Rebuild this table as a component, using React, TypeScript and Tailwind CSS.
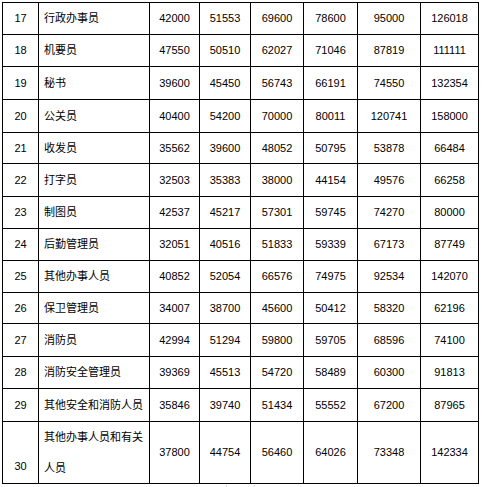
const rows: { no: string; name: string; vals: number[]; h: string }[] = [
  { no: '17', name: '行政办事员', vals: [42000, 51553, 69600, 78600, 95000, 126018], h: 'h-[32px]' },
  { no: '18', name: '机要员', vals: [47550, 50510, 62027, 71046, 87819, 111111], h: 'h-[32px]' },
  { no: '19', name: '秘书', vals: [39600, 45450, 56743, 66191, 74550, 132354], h: 'h-[33px]' },
  { no: '20', name: '公关员', vals: [40400, 54200, 70000, 80011, 120741, 158000], h: 'h-[33px]' },
  { no: '21', name: '收发员', vals: [35562, 39600, 48052, 50795, 53878, 66484], h: 'h-[31px]' },
  { no: '22', name: '打字员', vals: [32503, 35383, 38000, 44154, 49576, 66258], h: 'h-[33px]' },
  { no: '23', name: '制图员', vals: [42537, 45217, 57301, 59745, 74270, 80000], h: 'h-[32px]' },
  { no: '24', name: '后勤管理员', vals: [32051, 40516, 51833, 59339, 67173, 87749], h: 'h-[32px]' },
  { no: '25', name: '其他办事人员', vals: [40852, 52054, 66576, 74975, 92534, 142070], h: 'h-[32px]' },
  { no: '26', name: '保卫管理员', vals: [34007, 38700, 45600, 50412, 58320, 62196], h: 'h-[31px]' },
  { no: '27', name: '消防员', vals: [42994, 51294, 59800, 59705, 68596, 74100], h: 'h-[33px]' },
  { no: '28', name: '消防安全管理员', vals: [39369, 45513, 54720, 58489, 60300, 91813], h: 'h-[32px]' },
  { no: '29', name: '其他安全和消防人员', vals: [35846, 39740, 51434, 55552, 67200, 87965], h: 'h-[33px]' },
];

const last = [37800, 44754, 56460, 64026, 73348, 142334];

const cell = 'border-l border-t border-black flex items-center';

export default function App() {
  return (
    <div
      className="w-[482px] h-[487px] bg-white text-black text-[11px] overflow-hidden pt-[2px] pl-[2px]"
      style={{ fontFamily: '"Liberation Sans", "Noto Sans CJK SC", sans-serif' }}
    >
      <div className="grid grid-cols-[36px_111px_50px_51px_53px_54px_63px_58px] w-[477px] border-r border-b border-black">
        {rows.map(r => (
          <div key={r.no} className="contents">
            <div className={`${cell} ${r.h} justify-center`}>{r.no}</div>
            <div className={`${cell} ${r.h} pl-[5px]`}>{r.name}</div>
            {r.vals.map((v, i) => (
              <div key={i} className={`${cell} ${r.h} justify-center`}>{v}</div>
            ))}
          </div>
        ))}
        <div className="border-l border-t border-black h-[62px] flex items-end justify-center pb-[9px]">30</div>
        <div className="border-l border-t border-black h-[62px] pl-[5px] leading-[31px]">
          其他办事人员和有关
          <br />
          人员
        </div>
        {last.map((v, i) => (
          <div key={i} className={`${cell} h-[62px] justify-center`}>{v}</div>
        ))}
      </div>
      <div className="ml-[224px] mt-[1px] w-[29px] h-[3px] border-l border-r border-b border-gray-300" />
    </div>
  );
}
